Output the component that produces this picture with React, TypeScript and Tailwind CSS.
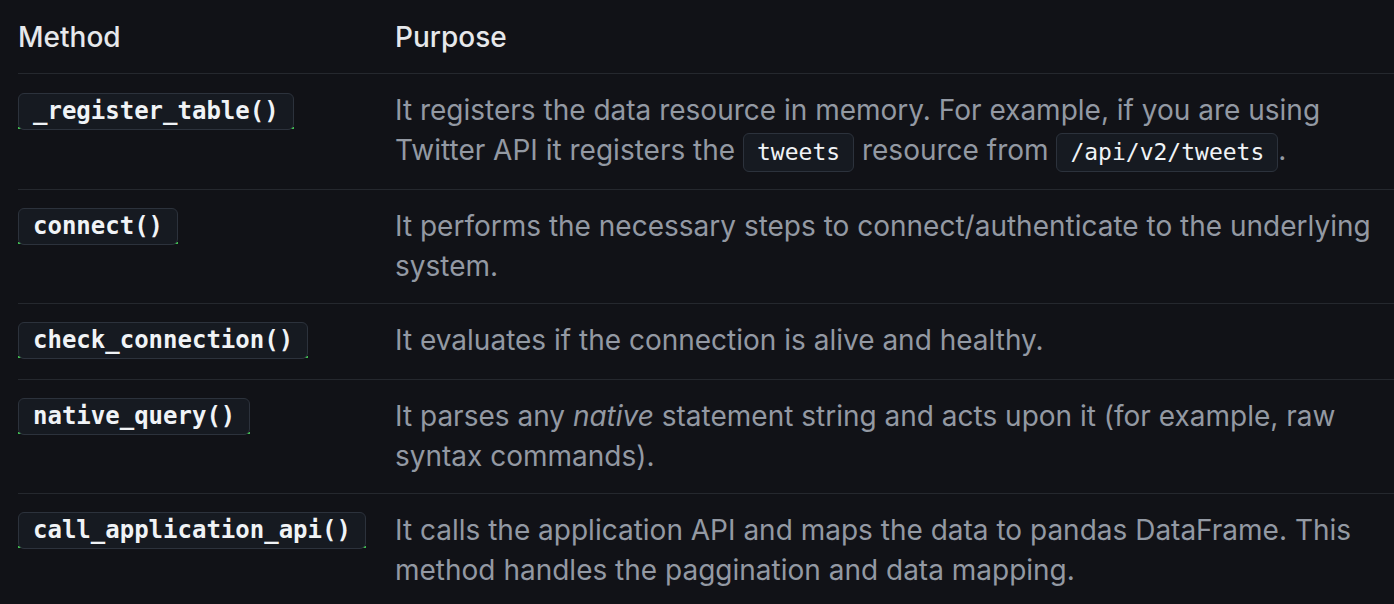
import React from "react";

type Row = {
  method: string;
  purpose: React.ReactNode;
};

const Code = ({ children }: { children: React.ReactNode }) => (
  <code className="inline-block rounded-md border border-[#2c323c] bg-[#161a21] px-[13px] leading-[37px] text-[23px] font-medium text-[#f0f3f6] [font-family:'DejaVu_Sans_Mono',monospace] align-middle">
    {children}
  </code>
);

const MethodBadge = ({ name }: { name: string }) => (
  <span className="relative inline-block">
    <span className="absolute bottom-[1px] left-0 right-0 h-[2px] bg-[#3fb950]" />
    <code className="relative z-10 inline-block rounded-md border border-[#2c323c] bg-[#161a21] px-[14px] leading-[35px] text-[24px] font-bold text-[#f0f3f6] [font-family:'DejaVu_Sans_Mono',monospace]">
      {name}
    </code>
  </span>
);

const rows: Row[] = [
  {
    method: "_register_table()",
    purpose: (
      <>
        It registers the data resource in memory. For example, if you are using Twitter API it registers the{" "}
        <Code>tweets</Code> resource from <Code>/api/v2/tweets</Code>.
      </>
    ),
  },
  {
    method: "connect()",
    purpose: "It performs the necessary steps to connect/authenticate to the underlying system.",
  },
  {
    method: "check_connection()",
    purpose: "It evaluates if the connection is alive and healthy.",
  },
  {
    method: "native_query()",
    purpose: (
      <>
        It parses any <em className="italic">native</em> statement string and acts upon it (for example, raw syntax
        commands).
      </>
    ),
  },
  {
    method: "call_application_api()",
    purpose:
      "It calls the application API and maps the data to pandas DataFrame. This method handles the paggination and data mapping.",
  },
];

export default function App() {
  return (
    <div className="min-h-[604px] w-[1394px] overflow-hidden bg-[#111217] pl-[18px] [font-family:Inter,'Noto_Sans',sans-serif]">
      <div className="grid grid-cols-[377px_1fr] border-b border-[#25282e] pt-[17px] pb-[16px] text-[28px] leading-[40px] font-medium text-[#e6e8eb]">
        <div>Method</div>
        <div>Purpose</div>
      </div>
      {rows.map((row) => (
        <div
          key={row.method}
          className="grid grid-cols-[377px_1fr] border-b border-[#25282e] pt-[16px] pb-[17px]"
        >
          <div className="flex h-[42px] items-center">
            <MethodBadge name={row.method} />
          </div>
          <div className="pr-[18px] text-[28px] leading-[40px] text-[#9399a3]">{row.purpose}</div>
        </div>
      ))}
    </div>
  );
}
